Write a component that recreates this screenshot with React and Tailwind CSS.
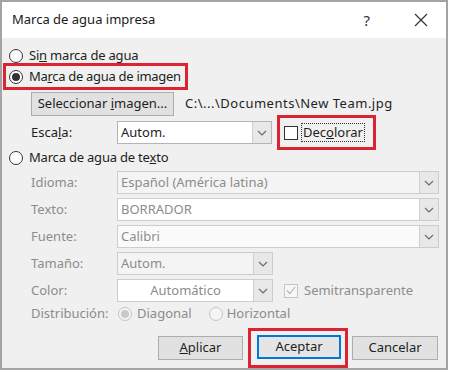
import React from "react";

const F = { fontFamily: '"Noto Sans", "Open Sans", sans-serif' };

function Chevron({ color = "#6b6b6b" }) {
  return (
    <svg width="10" height="6" viewBox="0 0 10 6">
      <path d="M1 1 L5 5 L9 1" fill="none" stroke={color} strokeWidth="1.2" />
    </svg>
  );
}

function Select({ w, text, bg = "bg-white", disabled = false, center = false, border = "border-[#c6c6c6]" }) {
  return (
    <div className={`flex h-[23px] items-stretch border ${border} ${bg}`} style={{ width: w }}>
      <div
        className={`flex flex-1 items-center whitespace-nowrap px-[3px] text-[13px] ${center ? "justify-center" : ""} ${
          disabled ? "text-[#8c8c8c]" : "text-[#1e1e1e]"
        }`}
      >
        {text}
      </div>
      <div className="flex w-[19px] items-center justify-center border-l border-[#cfcfcf] bg-[#e8e8e8]">
        <Chevron />
      </div>
    </div>
  );
}

function Radio({ checked = false, disabled = false }) {
  return (
    <div
      className={`flex h-[14px] w-[14px] shrink-0 items-center justify-center rounded-full border ${
        disabled ? "border-[#c4c4c4] bg-[#f5f5f5]" : "border-[#333] bg-white"
      }`}
    >
      {checked && (
        <div className={`h-[8px] w-[8px] rounded-full ${disabled ? "bg-[#c9c9c9]" : "bg-[#333]"}`} />
      )}
    </div>
  );
}

function Label({ children }) {
  return <div className="w-[86px] whitespace-nowrap pl-[29px] text-[13px] text-[#8c8c8c]">{children}</div>;
}

export default function App() {
  return (
    <div className="h-[372px] w-[450px] bg-white" style={F}>
      <div className="flex h-[370px] w-[448px] flex-col border-2 border-[#a3a3a3]">
        {/* Title bar */}
        <div className="flex h-[36px] items-center bg-white pl-[10px] pr-[18px]">
          <div className="flex-1 text-[13px] text-[#1a1a1a]">Marca de agua impresa</div>
          <div className="mr-[44px] text-[15px] text-[#333]">?</div>
          <svg width="14" height="14" viewBox="0 0 14 14">
            <path d="M1 1 L13 13 M13 1 L1 13" stroke="#333" strokeWidth="1.2" />
          </svg>
        </div>

        {/* Body */}
        <div className="flex flex-1 flex-col bg-[#f0f0f0] pt-[7px] text-[#1e1e1e]">
          {/* Sin marca */}
          <div className="flex h-[22px] items-center whitespace-nowrap pl-[7px] text-[13px] tracking-[-0.2px]">
            <Radio />
            <span className="ml-[6px]">
              Si<u>n</u> marca de agua
            </span>
          </div>

          {/* Marca de imagen (highlighted) */}
          <div className="-mt-[4px] ml-[1px] flex h-[27px] w-[185px] items-center whitespace-nowrap border-[3px] border-[#dc2332] pl-[3px] text-[13px] tracking-[-0.3px]">
            <Radio checked />
            <span className="ml-[6px]">
              Ma<u>r</u>ca de agua de imagen
            </span>
          </div>

          {/* Select image */}
          <div className="mt-[2px] flex h-[24px] items-center whitespace-nowrap pl-[29px] text-[13px]">
            <div className="flex h-[24px] w-[143px] items-center justify-center border border-[#adadad] bg-[#e1e1e1]">
              Seleccionar&nbsp;<u>i</u>magen...
            </div>
            <span className="ml-[11px] tracking-[0.5px]">C:\...\Documents\New Team.jpg</span>
          </div>

          {/* Escala */}
          <div className="-mt-[1px] flex h-[35px] items-center text-[13px]">
            <div className="w-[115px] pl-[29px]">
              Esca<u>l</u>a:
            </div>
            <Select w={155} text="Autom." border="border-[#b5b5b5]" />
            <div className="ml-[5px] flex h-[35px] w-[99px] items-center border-[3px] border-[#dc2332] pl-[4px]">
              <div className="h-[14px] w-[14px] border border-[#333] bg-white" />
              <span className="ml-[3px] border border-dotted border-[#333] px-[1px] leading-[17px]">
                Dec<u>o</u>lorar
              </span>
            </div>
          </div>

          {/* Marca de texto */}
          <div className="flex h-[16px] items-center whitespace-nowrap pl-[7px] text-[13px] tracking-[-0.2px]">
            <Radio />
            <span className="ml-[6px]">
              Marca de agua de te<u>x</u>to
            </span>
          </div>

          <div className="mt-[3px] flex flex-col">
            <div className="flex h-[27px] items-center">
              <Label>Idioma:</Label>
              <div className="ml-[29px]">
                <Select w={322} text="Español (América latina)" bg="bg-[#f4f4f4]" disabled border="border-[#cdcdcd]" />
              </div>
            </div>
            <div className="flex h-[27px] items-center">
              <Label>Texto:</Label>
              <div className="ml-[29px]">
                <Select w={322} text="BORRADOR" disabled border="border-[#cdcdcd]" />
              </div>
            </div>
            <div className="flex h-[27px] items-center">
              <Label>Fuente:</Label>
              <div className="ml-[29px]">
                <Select w={322} text="Calibri" bg="bg-[#fafafa]" disabled border="border-[#cdcdcd]" />
              </div>
            </div>
            <div className="flex h-[27px] items-center">
              <Label>Tamaño:</Label>
              <div className="ml-[29px]">
                <Select w={156} text="Autom." bg="bg-[#f4f4f4]" disabled border="border-[#cdcdcd]" />
              </div>
            </div>
            <div className="flex h-[27px] items-center">
              <Label>Color:</Label>
              <div className="ml-[29px]">
                <Select w={156} text="Automático" disabled center border="border-[#cdcdcd]" />
              </div>
              <div className="ml-[11px] flex h-[14px] w-[14px] items-center justify-center border border-[#c6c6c6] bg-[#f6f6f6]">
                <svg width="10" height="9" viewBox="0 0 10 9">
                  <path d="M1 4.5 L4 7.5 L9 1" fill="none" stroke="#b8b8b8" strokeWidth="1.2" />
                </svg>
              </div>
              <span className="ml-[6px] text-[13px] text-[#8c8c8c]">Semitransparente</span>
            </div>
            <div className="flex h-[20px] items-center whitespace-nowrap text-[13px] text-[#8c8c8c]">
              <div className="w-[116px] pl-[29px]">Distribución:</div>
              <Radio checked disabled />
              <span className="ml-[5px]">Diagonal</span>
              <div className="ml-[17px]">
                <Radio disabled />
              </div>
              <span className="ml-[4px]">Horizontal</span>
            </div>
          </div>

          {/* Buttons */}
          <div className="mt-[4px] flex h-[40px] items-center pl-[156px] text-[13px]">
            <div className="flex h-[24px] w-[85px] items-center justify-center border border-[#adadad] bg-[#e1e1e1]">
              <u>A</u>plicar
            </div>
            <div className="ml-[5px] flex h-[40px] w-[100px] items-start border-[3px] border-[#dc2332] pl-[6px] pt-[4px]">
              <div className="flex h-[24px] w-[84px] items-center justify-center border-2 border-[#0078d7] bg-[#e5e5e5]">
                Aceptar
              </div>
            </div>
            <div className="ml-[4px] flex h-[24px] w-[86px] items-center justify-center border border-[#adadad] bg-[#e1e1e1]">
              Cancelar
            </div>
          </div>
        </div>
      </div>
    </div>
  );
}
